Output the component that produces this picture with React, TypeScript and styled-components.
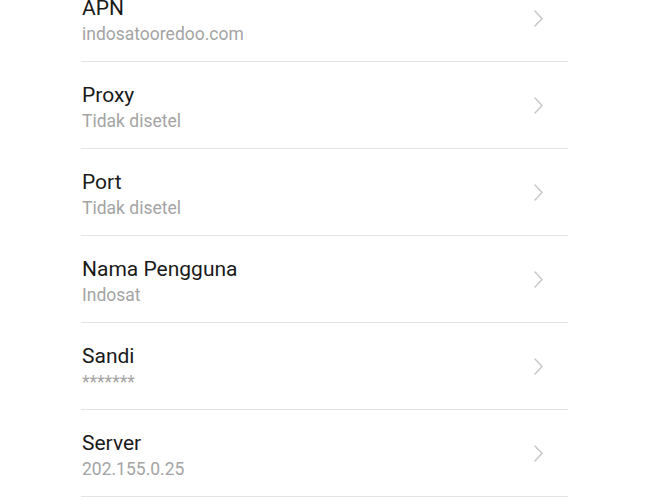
import React from 'react';
import styled, {createGlobalStyle} from 'styled-components';

const GlobalStyle = createGlobalStyle`
  html, body {
    margin: 0;
    padding: 0;
    background: #ffffff;
    overflow: hidden;
  }
  body {
    font-family: Roboto, "Noto Sans", "Liberation Sans", sans-serif;
  }
`

const Page = styled.div`
  width: 660px;
  height: 500px;
  overflow: hidden;
  background: #ffffff;
`

const List = styled.ul`
  list-style: none;
  margin: -25px 0 0 81px;
  padding: 0;
  width: 487px;
`

const Row = styled.li`
  display: flex;
  align-items: center;
  height: 86px;
  border-bottom: 1px solid #e3e3e3;
  padding-right: 25px;
  box-sizing: content-box;
`

const Texts = styled.div`
  flex: 1;
  display: flex;
  flex-direction: column;
  gap: 3px;
  padding: 5px 0 0 1px;
`

const Title = styled.span`
  font-size: 21px;
  line-height: 25px;
  color: #1a1a1a;
`

const Subtitle = styled.span`
  font-size: 17.5px;
  line-height: 21px;
  color: #a4a4a4;
`

const Chevron = () => (
    <svg width="9" height="17" viewBox="0 0 9 17" fill="none">
        <path d="M1 1 L8 8.5 L1 16" stroke="#c6c6c6" strokeWidth="1.4" strokeLinecap="round" strokeLinejoin="round"/>
    </svg>
)

type Setting = {
    title: string
    value: string
}

const settings: Setting[] = [
    {title: "APN", value: "indosatooredoo.com"},
    {title: "Proxy", value: "Tidak disetel"},
    {title: "Port", value: "Tidak disetel"},
    {title: "Nama Pengguna", value: "Indosat"},
    {title: "Sandi", value: "*******"},
    {title: "Server", value: "202.155.0.25"},
]

const App = () => {
    return (
        <Page>
            <GlobalStyle/>
            <List>
                {settings.map(item =>
                    <Row key={item.title}>
                        <Texts>
                            <Title>{item.title}</Title>
                            <Subtitle>{item.value}</Subtitle>
                        </Texts>
                        <Chevron/>
                    </Row>
                )}
            </List>
        </Page>
    );
};

export default App;
